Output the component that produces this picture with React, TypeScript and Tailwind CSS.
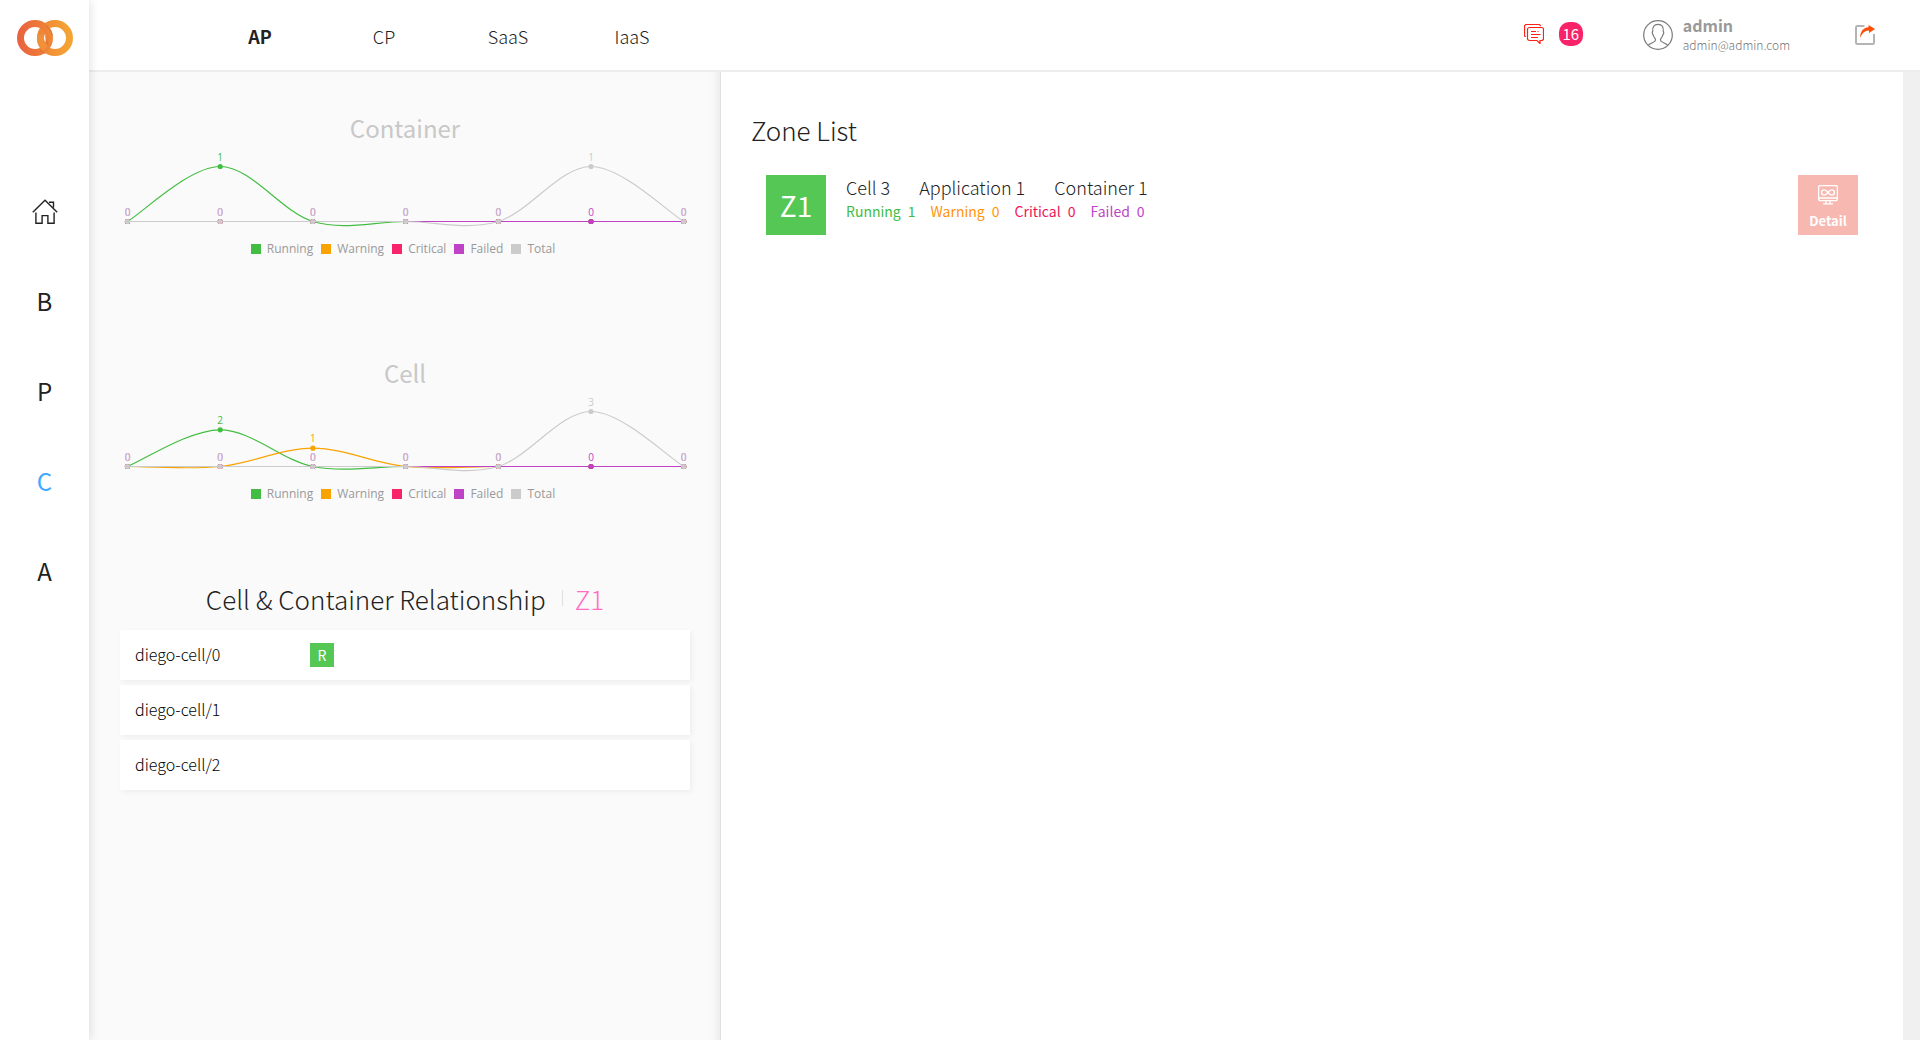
import React from "react";

type Series = { name: string; color: string; values: number[] };

const COLORS = {
  running: "#42bd41",
  warning: "#f9a300",
  critical: "#f82369",
  failed: "#bf43c6",
  total: "#cbcbcb",
};

function makeSeries(running: number, warning: number, total: number): Series[] {
  return [
    { name: "Running", color: COLORS.running, values: [0, running, 0, 0, 0, 0, 0] },
    { name: "Warning", color: COLORS.warning, values: [0, 0, warning, 0, 0, 0, 0] },
    { name: "Critical", color: COLORS.critical, values: [0, 0, 0, 0, 0, 0, 0] },
    { name: "Failed", color: COLORS.failed, values: [0, 0, 0, 0, 0, 0, 0] },
    { name: "Total", color: COLORS.total, values: [0, 0, 0, 0, 0, total, 0] },
  ];
}

const CHART = { left: 7.5, step: 92.7, base: 75.5, height: 55 };

/* Smooth curve through every point, with tangents taken from the neighbours. */
function curve(points: number[][]): string {
  let d = `M${points[0][0]},${points[0][1]}`;
  for (let i = 0; i < points.length - 1; i++) {
    const p0 = points[Math.max(0, i - 1)];
    const p1 = points[i];
    const p2 = points[i + 1];
    const p3 = points[Math.min(points.length - 1, i + 2)];
    const c1 = [p1[0] + (p2[0] - p0[0]) / 6, p1[1] + (p2[1] - p0[1]) / 6];
    const c2 = [p2[0] - (p3[0] - p1[0]) / 6, p2[1] - (p3[1] - p1[1]) / 6];
    d += `C${c1[0]},${c1[1]} ${c2[0]},${c2[1]} ${p2[0]},${p2[1]}`;
  }
  return d;
}

function StatusChart({ title, series }: { title: string; series: Series[] }) {
  const max = Math.max(...series.flatMap((s) => s.values));
  return (
    <section className="h-[215px]">
      <h2 className="text-center text-2xl leading-9 text-[#c8c8c8]">{title}</h2>
      <svg viewBox="0 0 570 89" className="block w-full" role="img" aria-label={title}>
        {series.map((s) => {
          const pts = s.values.map((v, i) => [
            CHART.left + i * CHART.step,
            CHART.base - (v / max) * CHART.height,
          ]);
          const showZeros = s.name === "Failed" || s.name === "Total";
          return (
            <g key={s.name}>
              <path d={curve(pts)} fill="none" stroke={s.color} strokeWidth="1.2" />
              {pts.map(([x, y], i) => (
                <g key={i}>
                  <circle cx={x} cy={y} r="2.6" fill={s.color} />
                  {(showZeros || s.values[i] > 0) && (
                    <text
                      x={x}
                      y={y - 6}
                      textAnchor="middle"
                      fill={s.color}
                      className="font-['Open_Sans',sans-serif] text-[10px]"
                    >
                      {s.values[i]}
                    </text>
                  )}
                </g>
              ))}
            </g>
          );
        })}
      </svg>
      <ul className="mt-1 flex justify-center gap-2 pr-1 font-['Open_Sans',sans-serif] text-xs leading-5 text-[#999]">
        <Legend className="bg-[#42bd41]" label="Running" />
        <Legend className="bg-[#f9a300]" label="Warning" />
        <Legend className="bg-[#f82369]" label="Critical" />
        <Legend className="bg-[#bf43c6]" label="Failed" />
        <Legend className="bg-[#cbcbcb]" label="Total" />
      </ul>
    </section>
  );
}

function Legend({ className, label }: { className: string; label: string }) {
  return (
    <li className="flex items-center gap-1.5">
      <span className={`size-2.5 ${className}`} />
      {label}
    </li>
  );
}

function Logo() {
  return (
    <svg viewBox="0 0 56 36" className="h-9 w-14" role="img" aria-label="Logo">
      <defs>
        <linearGradient id="ringL" x1="0" x2="1" y1="0" y2="0">
          <stop offset="0" stopColor="#ea633f" />
          <stop offset="1" stopColor="#ef8636" />
        </linearGradient>
        <linearGradient id="ringR" x1="0" x2="1" y1="0" y2="0">
          <stop offset="0" stopColor="#ef8636" />
          <stop offset="1" stopColor="#f5a433" />
        </linearGradient>
      </defs>
      <circle cx="38" cy="18" r="14.5" fill="none" stroke="url(#ringR)" strokeWidth="7" />
      <circle cx="18" cy="18" r="14.5" fill="none" stroke="url(#ringL)" strokeWidth="7" />
      <path d="M28.5 28.5A14.5 14.5 0 0 1 23.8 14.5" fill="none" stroke="#f0903a" strokeWidth="7" />
      <path d="M28.4 5.5Q34.5 9.5 35.6 16" fill="none" stroke="#c9622b" strokeWidth="0.8" opacity="0.7" />
      <path d="M27.8 13Q28.6 20 31 24.5M23 30.5L28.5 34" fill="none" stroke="#c9622b" strokeWidth="0.8" opacity="0.7" />
    </svg>
  );
}

function HomeIcon() {
  return (
    <svg viewBox="0 0 26 26" className="size-[26px]" fill="none" stroke="#222" strokeWidth="1.4" aria-hidden="true">
      <path d="M.8 13.2 13 1.2l12.2 12M3.9 13.4v10.8h6.2v-7.6h5.8v7.6h6.2V13.4M17 3.2h4.5v5.4" />
    </svg>
  );
}

function ChatIcon() {
  return (
    <svg viewBox="0 0 20 20" className="size-5" fill="none" stroke="#ff2018" strokeWidth="1.2" aria-hidden="true">
      <path d="M1.8 12.5H1.5a1 1 0 0 1-1-1v-9a2 2 0 0 1 2-2h12a2 2 0 0 1 2 1.8" />
      <path d="M5.5 3.5h12a2 2 0 0 1 2 2v9a2 2 0 0 1-2 2h-1.5v3l-3-3H5.5a2 2 0 0 1-2-2v-9a2 2 0 0 1 2-2z" />
      <path d="M7 7.5h5M13.5 7.5h1M7 10.5h9.5M7 13.5h7" />
    </svg>
  );
}

function AvatarIcon() {
  return (
    <svg viewBox="0 0 30 30" className="size-[30px]" fill="none" stroke="#7a7a7a" strokeWidth="1.2" aria-hidden="true">
      <circle cx="15" cy="15" r="14.3" />
      <path d="M5.3 25.3c1-1.7 5.2-2.6 6.7-4.1.6-.9.5-2 .3-2.5-1.6-1.3-2-3.1-2.3-4.2-.8-.3-1-2.4-.3-3-.3-4.3 1.1-7.2 5.3-7.2s5.6 2.9 5.3 7.2c.7.6.5 2.7-.3 3-.3 1.1-.7 2.9-2.3 4.2-.2.5-.3 1.6.3 2.5 1.5 1.5 5.7 2.4 6.7 4.1" />
    </svg>
  );
}

function ShareIcon() {
  return (
    <svg viewBox="0 0 20 20" className="size-5" fill="none" aria-hidden="true">
      <path d="M9.5 1H2.5A1.5 1.5 0 0 0 1 2.5v15A1.5 1.5 0 0 0 2.5 19h15a1.5 1.5 0 0 0 1.5-1.5V9" stroke="#b4b4b4" strokeWidth="2" />
      <path d="M13.5 0 20 4l-6 4V5.6C9.5 5.8 7 8.5 5 13c0-6 3-10.3 8.5-10.8z" fill="#ff4e08" />
    </svg>
  );
}

function MonitorIcon() {
  return (
    <svg viewBox="0 0 20 20" className="size-5" fill="none" stroke="#fff" strokeWidth="1.3" aria-hidden="true">
      <rect x=".6" y=".6" width="18.8" height="15" rx="1.5" />
      <path d="M.6 13h18.8M8 15.6v3M12 15.6v3M5 18.8h10" />
      <path d="M10 7.5C8.5 5.5 7.5 4.9 6.2 4.9a2.6 2.6 0 0 0 0 5.2c1.3 0 2.3-.6 3.8-2.6s2.5-2.6 3.8-2.6a2.6 2.6 0 0 1 0 5.2c-1.3 0-2.3-.6-3.8-2.6z" />
    </svg>
  );
}

const sideItems = ["B", "P", "C", "A"];
const tabs = ["AP", "CP", "SaaS", "IaaS"];
const cells = [
  { name: "diego-cell/0", containers: ["R"] },
  { name: "diego-cell/1", containers: [] },
  { name: "diego-cell/2", containers: [] },
];
const totals = ["Cell 3", "Application 1", "Container 1"];
const statuses = [
  { label: "Running", value: 1, className: "text-[#42bd41]" },
  { label: "Warning", value: 0, className: "text-[#ff9508]" },
  { label: "Critical", value: 0, className: "text-[#f0145a]" },
  { label: "Failed", value: 0, className: "text-[#bf43c6]" },
];

export default function App() {
  return (
    <div className="flex min-h-screen bg-white font-['Noto_Sans_CJK_KR','Noto_Sans',sans-serif] text-[#222]">
      <aside className="z-10 flex w-[89px] shrink-0 flex-col items-center bg-white pt-5 shadow-[0_0_10px_rgba(0,0,0,0.15)]">
        <a href="#top">
          <Logo />
        </a>
        <nav className="mt-[111px] flex w-full flex-col">
          <a href="#home" aria-label="Home" className="flex h-[90px] items-center justify-center">
            <HomeIcon />
          </a>
          {sideItems.map((item) => (
            <a
              key={item}
              href={`#${item}`}
              className={`flex h-[90px] items-center justify-center pb-0.5 text-2xl ${item === "C" ? "text-[#3fa9ff]" : "text-[#222]"}`}
            >
              {item}
            </a>
          ))}
        </nav>
      </aside>

      <div className="flex min-w-0 flex-1 flex-col">
        <header className="flex h-[72px] items-center border-b-2 border-[#ededed] pr-[45px] pl-[109px]">
          <nav className="flex pt-0.5 text-lg">
            {tabs.map((tab) => (
              <a
                key={tab}
                href={`#${tab}`}
                className={`w-[124px] text-center ${tab === "AP" ? "font-bold" : "font-light"}`}
              >
                {tab}
              </a>
            ))}
          </nav>
          <div className="ml-auto flex items-center">
            <button type="button" aria-label="Messages" className="flex items-center gap-[15px] pb-0.5">
              <ChatIcon />
              <span className="flex size-6 items-center justify-center rounded-[10px] bg-[#f82369] text-[15px] text-white">
                16
              </span>
            </button>
            <div className="ml-[60px] flex items-center gap-2.5">
              <AvatarIcon />
              <div className="text-[#999]">
                <p className="text-base leading-5 font-bold">admin</p>
                <p className="text-xs leading-5 font-light text-[#777]">admin@admin.com</p>
              </div>
            </div>
            <button type="button" aria-label="Log out" className="ml-[65px]">
              <ShareIcon />
            </button>
          </div>
        </header>

        <main className="grid flex-1 grid-cols-[minmax(0,632fr)_minmax(0,1182fr)] border-r-[17px] border-[#f0f0f0]">
          <div className="border-r border-[#e0e0e0] bg-[#fafafa] pt-[38px] pr-[30px] pl-[31px] shadow-[inset_-10px_0_10px_-8px_rgba(0,0,0,0.08)]">
            <div className="flex flex-col gap-[30px]">
              <StatusChart title="Container" series={makeSeries(1, 0, 1)} />
              <StatusChart title="Cell" series={makeSeries(2, 1, 3)} />
            </div>
            <section>
              <h2 className="flex h-[60px] items-center justify-center pb-1 text-[26px] font-light">
                Cell &amp; Container Relationship
                <span className="mr-3 ml-4 h-4 w-px bg-[#e0e0e0]" />
                <span className="text-[#ff6fc4]">Z1</span>
              </h2>
              <ul className="flex flex-col gap-[5px]">
                {cells.map((cell) => (
                  <li
                    key={cell.name}
                    className="flex h-[50px] items-center bg-white px-[15px] shadow-[2px_2px_5px_rgba(0,0,0,0.05)]"
                  >
                    <span className="w-[175px] pb-0.5 text-base font-light text-black">{cell.name}</span>
                    {cell.containers.map((c) => (
                      <button
                        key={c}
                        type="button"
                        className="flex size-6 items-center justify-center bg-[#54c754] text-sm text-white"
                      >
                        {c}
                      </button>
                    ))}
                  </li>
                ))}
              </ul>
            </section>
          </div>

          <section className="px-[30px] pt-[38px]">
            <h2 className="text-[26px] leading-10 font-light">Zone List</h2>
            <div className="mt-[25px] flex px-[15px]">
              <div className="flex size-[60px] items-center justify-center bg-[#54c754] text-[28px] text-white">Z1</div>
              <div className="ml-5">
                <p className="flex gap-[29px] text-lg leading-6 font-light">
                  {totals.map((t) => (
                    <span key={t}>{t}</span>
                  ))}
                </p>
                <p className="flex gap-[15px] text-sm leading-6">
                  {statuses.map((s) => (
                    <span key={s.label} className={`flex gap-[7px] ${s.className}`}>
                      <span>{s.label}</span>
                      <span>{s.value}</span>
                    </span>
                  ))}
                </p>
              </div>
              <button
                type="button"
                className="ml-auto flex size-[60px] flex-col items-center justify-center gap-1.5 bg-[#f8b8b2] pt-1.5 text-[13px] leading-5 font-bold text-white"
              >
                <MonitorIcon />
                Detail
              </button>
            </div>
          </section>
        </main>
      </div>
    </div>
  );
}
